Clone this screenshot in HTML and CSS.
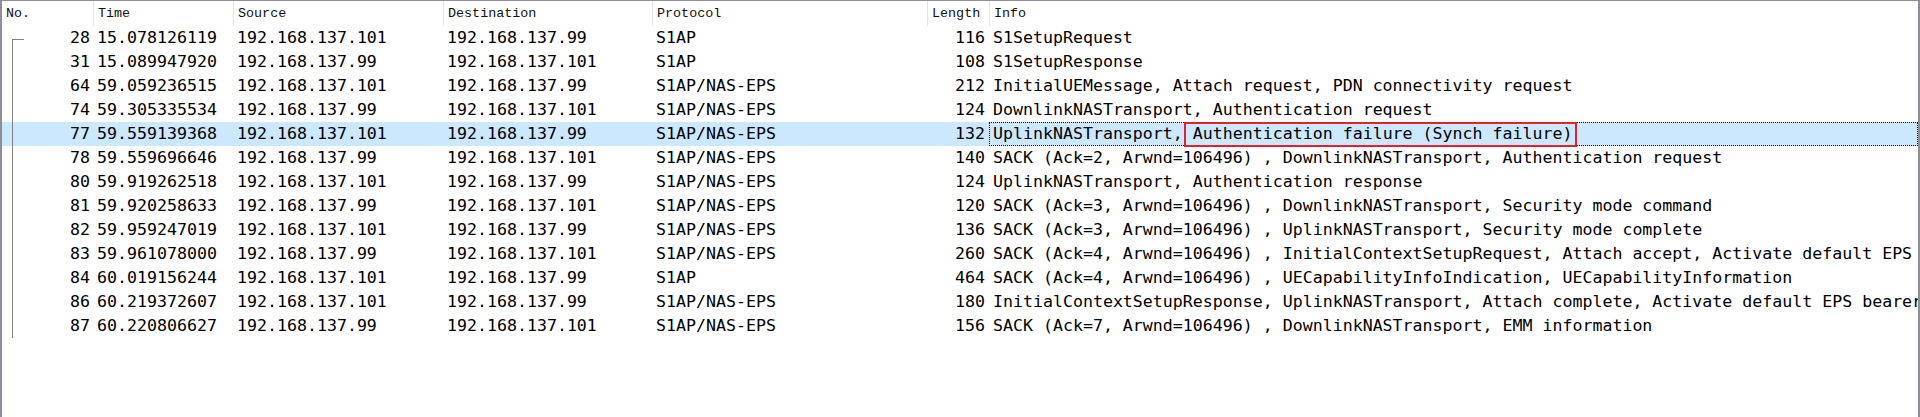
FILE: index.html
```html
<!DOCTYPE html>
<html>
<head>
<meta charset="utf-8">
<link rel="stylesheet" href="styles.css">
</head>
<body>
<div class="list">
  <div class="row head">
    <div class="hc first">No.</div>
    <div class="hc">Time</div>
    <div class="hc">Source</div>
    <div class="hc">Destination</div>
    <div class="hc">Protocol</div>
    <div class="hc">Length</div>
    <div class="hc">Info</div>
  </div>
  <div class="row">
    <div class="c no"><span class="tree top"></span><span class="num">28</span></div>
    <div class="c">15.078126119</div><div class="c">192.168.137.101</div><div class="c">192.168.137.99</div><div class="c">S1AP</div><div class="c len">116</div><div class="c info">S1SetupRequest</div>
  </div>
  <div class="row">
    <div class="c no"><span class="tree"></span><span class="num">31</span></div>
    <div class="c">15.089947920</div><div class="c">192.168.137.99</div><div class="c">192.168.137.101</div><div class="c">S1AP</div><div class="c len">108</div><div class="c info">S1SetupResponse</div>
  </div>
  <div class="row">
    <div class="c no"><span class="tree"></span><span class="num">64</span></div>
    <div class="c">59.059236515</div><div class="c">192.168.137.101</div><div class="c">192.168.137.99</div><div class="c">S1AP/NAS-EPS</div><div class="c len">212</div><div class="c info">InitialUEMessage, Attach request, PDN connectivity request</div>
  </div>
  <div class="row">
    <div class="c no"><span class="tree"></span><span class="num">74</span></div>
    <div class="c">59.305335534</div><div class="c">192.168.137.99</div><div class="c">192.168.137.101</div><div class="c">S1AP/NAS-EPS</div><div class="c len">124</div><div class="c info">DownlinkNASTransport, Authentication request</div>
  </div>
  <div class="row sel">
    <div class="c no"><span class="tree"></span><span class="num">77</span></div>
    <div class="c">59.559139368</div><div class="c">192.168.137.101</div><div class="c">192.168.137.99</div><div class="c">S1AP/NAS-EPS</div><div class="c len">132</div><div class="c info focus">UplinkNASTransport, <span class="mark">Authentication failure (Synch failure)</span></div>
  </div>
  <div class="row">
    <div class="c no"><span class="tree"></span><span class="num">78</span></div>
    <div class="c">59.559696646</div><div class="c">192.168.137.99</div><div class="c">192.168.137.101</div><div class="c">S1AP/NAS-EPS</div><div class="c len">140</div><div class="c info">SACK (Ack=2, Arwnd=106496) , DownlinkNASTransport, Authentication request</div>
  </div>
  <div class="row">
    <div class="c no"><span class="tree"></span><span class="num">80</span></div>
    <div class="c">59.919262518</div><div class="c">192.168.137.101</div><div class="c">192.168.137.99</div><div class="c">S1AP/NAS-EPS</div><div class="c len">124</div><div class="c info">UplinkNASTransport, Authentication response</div>
  </div>
  <div class="row">
    <div class="c no"><span class="tree"></span><span class="num">81</span></div>
    <div class="c">59.920258633</div><div class="c">192.168.137.99</div><div class="c">192.168.137.101</div><div class="c">S1AP/NAS-EPS</div><div class="c len">120</div><div class="c info">SACK (Ack=3, Arwnd=106496) , DownlinkNASTransport, Security mode command</div>
  </div>
  <div class="row">
    <div class="c no"><span class="tree"></span><span class="num">82</span></div>
    <div class="c">59.959247019</div><div class="c">192.168.137.101</div><div class="c">192.168.137.99</div><div class="c">S1AP/NAS-EPS</div><div class="c len">136</div><div class="c info">SACK (Ack=3, Arwnd=106496) , UplinkNASTransport, Security mode complete</div>
  </div>
  <div class="row">
    <div class="c no"><span class="tree"></span><span class="num">83</span></div>
    <div class="c">59.961078000</div><div class="c">192.168.137.99</div><div class="c">192.168.137.101</div><div class="c">S1AP/NAS-EPS</div><div class="c len">260</div><div class="c info">SACK (Ack=4, Arwnd=106496) , InitialContextSetupRequest, Attach accept, Activate default EPS bearer context request</div>
  </div>
  <div class="row">
    <div class="c no"><span class="tree"></span><span class="num">84</span></div>
    <div class="c">60.019156244</div><div class="c">192.168.137.101</div><div class="c">192.168.137.99</div><div class="c">S1AP</div><div class="c len">464</div><div class="c info">SACK (Ack=4, Arwnd=106496) , UECapabilityInfoIndication, UECapabilityInformation</div>
  </div>
  <div class="row">
    <div class="c no"><span class="tree"></span><span class="num">86</span></div>
    <div class="c">60.219372607</div><div class="c">192.168.137.101</div><div class="c">192.168.137.99</div><div class="c">S1AP/NAS-EPS</div><div class="c len">180</div><div class="c info">InitialContextSetupResponse, UplinkNASTransport, Attach complete, Activate default EPS bearer context accept</div>
  </div>
  <div class="row">
    <div class="c no"><span class="tree"></span><span class="num">87</span></div>
    <div class="c">60.220806627</div><div class="c">192.168.137.99</div><div class="c">192.168.137.101</div><div class="c">S1AP/NAS-EPS</div><div class="c len">156</div><div class="c info">SACK (Ack=7, Arwnd=106496) , DownlinkNASTransport, EMM information</div>
  </div>
</div>
</body>
</html>
```

FILE: styles.css
```css
html, body {
  margin: 0;
  padding: 0;
  background: #ffffff;
}

.list {
  box-sizing: border-box;
  width: 1920px;
  height: 417px;
  border-top: 1px solid #8c9096;
  border-left: 2px solid #8c9096;
  border-right: 2px solid #8c9096;
  background: #ffffff;
  overflow: hidden;
}

.row {
  display: grid;
  grid-template-columns: 91px 140px 210px 209px 275px 62px 1fr;
  height: 24px;
  font-family: "DejaVu Sans Mono", monospace;
  font-size: 16.6px;
  line-height: 24px;
  color: #000000;
  white-space: nowrap;
}

.row.head {
  height: 25px;
  line-height: 25px;
  font-family: "Liberation Mono", monospace;
  font-size: 13.4px;
  color: #111111;
}

.hc {
  padding-left: 4px;
  border-left: 1px solid #e5e5e5;
  overflow: hidden;
}

.hc.first {
  border-left: none;
}

.c {
  padding-left: 4px;
  overflow: hidden;
}

.c.no {
  display: flex;
  padding-left: 10px;
  padding-right: 3px;
}

.tree {
  width: 11px;
  flex: none;
  border-left: 1px solid #808080;
}

.tree.top {
  margin-top: 13px;
  border-top: 1px solid #808080;
}

.num {
  flex: 1;
  text-align: right;
}

.c.len {
  text-align: right;
  padding-left: 0;
  padding-right: 4px;
}

.row.sel {
  background: #cce8ff;
}

.c.focus {
  outline: 1px dotted #000000;
  outline-offset: -1px;
  overflow: visible;
}

.mark {
  position: relative;
  display: inline-block;
  height: 24px;
  vertical-align: top;
}

.mark::after {
  content: "";
  position: absolute;
  left: -9px;
  right: -5px;
  top: 0;
  bottom: -1px;
  border: 2px solid #e3202b;
}
```
